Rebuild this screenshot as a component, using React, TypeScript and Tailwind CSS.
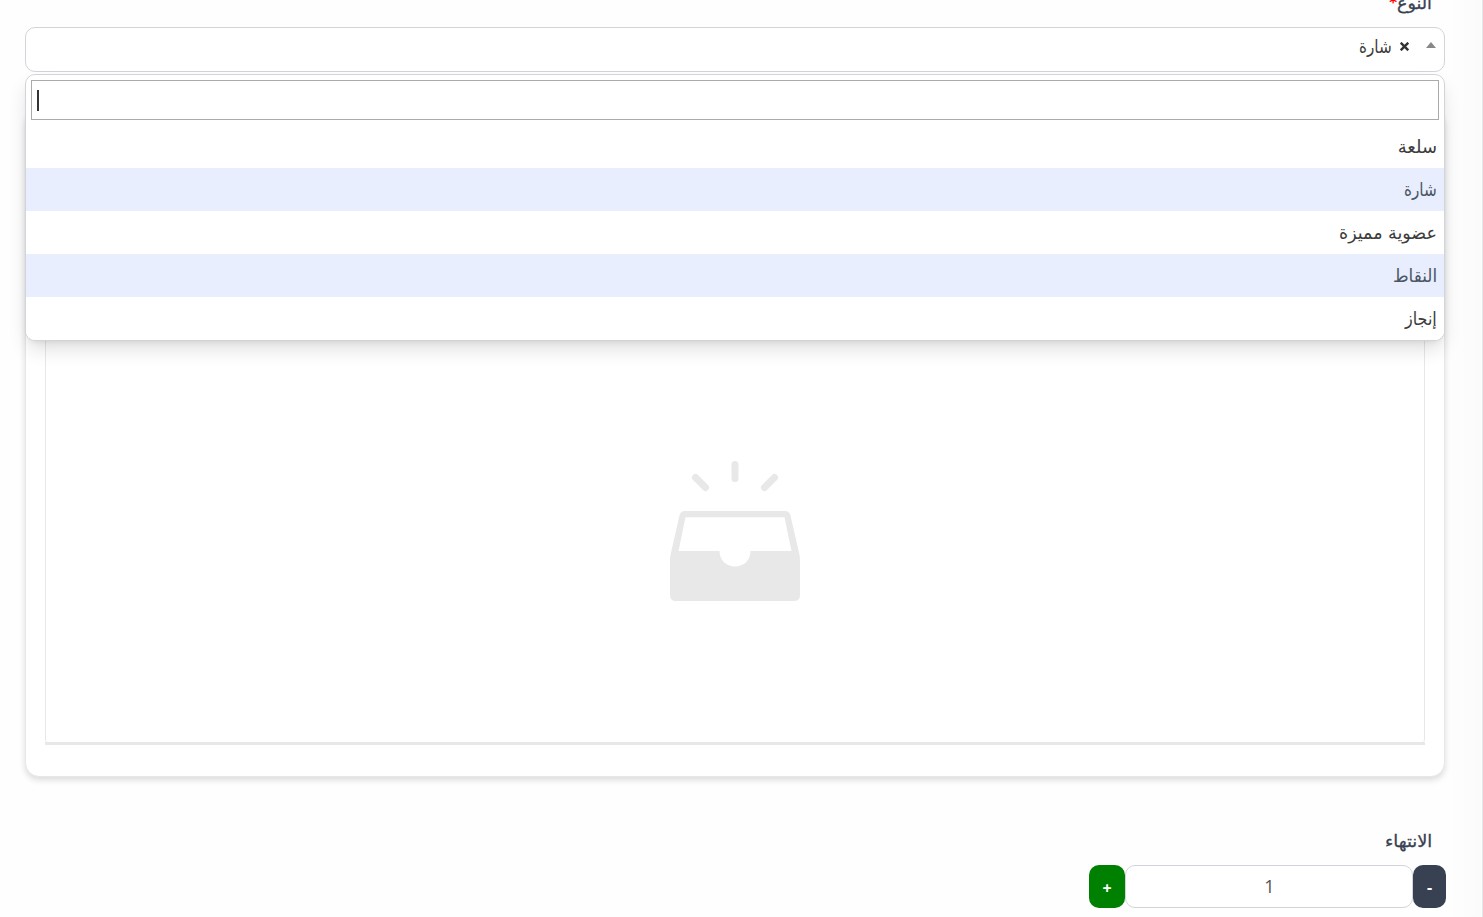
import React from "react";

const options = [
  { label: "سلعة", active: false, width: 39 },
  { label: "شارة", active: true, width: 33 },
  { label: "عضوية مميزة", active: false, width: 98 },
  { label: "النقاط", active: true, width: 44 },
  { label: "إنجاز", active: false, width: 32 },
];

function FitText({ text, width, className = "" }: { text: string; width: number; className?: string }) {
  const ref = React.useRef<HTMLSpanElement>(null);
  const [scale, setScale] = React.useState(1);
  React.useLayoutEffect(() => {
    if (ref.current) setScale(width / ref.current.offsetWidth);
  }, [width]);
  return (
    <span className="inline-flex justify-start whitespace-nowrap" style={{ width }}>
      <span ref={ref} className={`inline-block shrink-0 origin-right ${className}`} style={{ transform: `scaleX(${scale})` }}>
        {text}
      </span>
    </span>
  );
}

function EmptyInbox() {
  return (
    <svg width="130" height="140" viewBox="0 0 130 140" fill="none">
      <g stroke="#e8e8e8" strokeWidth="7" strokeLinecap="round">
        <path d="M65 3.500v14M25.500 16.500l10 10M104.500 16.500l-10 10" />
      </g>
      <path
        fill="#e8e8e8"
        fillRule="evenodd"
        d="M15 50h100q4.500 0 5.500 4.500L129.300 93q.7 3 .7 6v35q0 6-6 6H6q-6 0-6-6V99q0-3 .7-6L9.500 54.500Q10.500 50 15 50ZM15.500 56.300 8.500 90H49.500C49.500 99 56 105.500 65 105.500S80.500 99 80.500 90h41L114.500 56.300Z"
      />
    </svg>
  );
}

export default function App() {
  return (
    <div
      dir="rtl"
      className="relative flex h-[917px] w-full flex-col overflow-hidden border-r border-[#e5e7eb] bg-[linear-gradient(to_left,#fbfbfb_0px,#fefefe_34px)] pr-[37px] pl-[25px] font-['DejaVu_Sans',sans-serif] text-[18px] text-[#3c3c3c]"
    >
      <div className="-mt-[10px] flex h-[37px] shrink-0 items-start pr-[13px] leading-[26px] text-[#374151]">
        <FitText text="النوع" width={35} className="text-[17px] [-webkit-text-stroke:0.3px_#374151]" />
        <span className="text-[15px] font-bold leading-[26px] text-[#ff0000]">*</span>
      </div>

      <div className="flex h-[45px] shrink-0 items-start rounded-[10px] border border-[#d1d5db] bg-white pt-[6px] pr-[8px]">
        <svg className="mt-[8px]" width="10" height="6" viewBox="0 0 10 6">
          <path d="M5 0l5 6H0z" fill="#888" />
        </svg>
        <span className="mr-[17px] flex h-[25px] w-[9px] items-center justify-center">
          <svg width="9" height="9" viewBox="0 0 9 9" stroke="#333" strokeWidth="2.400">
            <path d="M.7.7l7.600 7.600M8.300.7L.7 8.300" />
          </svg>
        </span>
        <span className="mr-[8px] leading-[25px]">
          <FitText text="شارة" width={33} />
        </span>
      </div>

      <div className="mt-[38px] flex h-[667px] shrink-0 flex-col rounded-[14px] border border-[#e5e7eb] bg-white px-[19px] pb-[31px] shadow-[0_3px_6px_rgba(0,0,0,0.14)]">
        <div className="mt-[19px] flex grow items-center justify-center rounded-b-[3px] border-x border-[#e7e7e7] pt-[189px]">
          <EmptyInbox />
        </div>
        <div className="h-[3px] shrink-0 bg-[#e8e8e8]" />
      </div>

      <div className="mt-[45px] mb-[3px] flex h-[40px] shrink-0 items-center pr-[13px] text-[#374151]">
        <FitText text="الانتهاء" width={47} className="text-[17px] [-webkit-text-stroke:0.3px_#374151]" />
      </div>

      <div className="-mr-px flex h-[43px] shrink-0 font-['Open_Sans',sans-serif]">
        <button className="w-[33px] rounded-[10px] bg-[#374151] text-[16px] font-bold text-white">-</button>
        <div className="flex w-[288px] items-center justify-center rounded-[10px] border border-[#d1d5db] bg-white pb-px pl-px text-[18px] text-[#555]">
          1
        </div>
        <button className="w-[36px] rounded-[10px] bg-[#008000] pt-[2px] text-[16px] font-bold text-white">+</button>
      </div>

      <div className="absolute top-[74px] right-[37px] left-[25px] flex h-[267px] flex-col overflow-hidden rounded-[10px] border border-[#d1d5db] bg-white shadow-[0_10px_20px_-3px_rgba(0,0,0,0.14),0_4px_6px_-4px_rgba(0,0,0,0.1)]">
        <div className="mx-[5px] mt-[5px] flex h-[40px] shrink-0 items-center justify-end border border-[#aaa] pl-[5px]">
          <span className="h-[21px] w-[2px] bg-[#333]" />
        </div>
        <div className="mt-[5px] flex flex-col">
          {options.map((o) => (
            <div
              key={o.label}
              className={`flex h-[43px] items-center pb-px pr-[7px] ${o.active ? "bg-[#e8eefd] text-[#4b5563]" : "bg-white"}`}
            >
              <FitText text={o.label} width={o.width} />
            </div>
          ))}
        </div>
      </div>
    </div>
  );
}
